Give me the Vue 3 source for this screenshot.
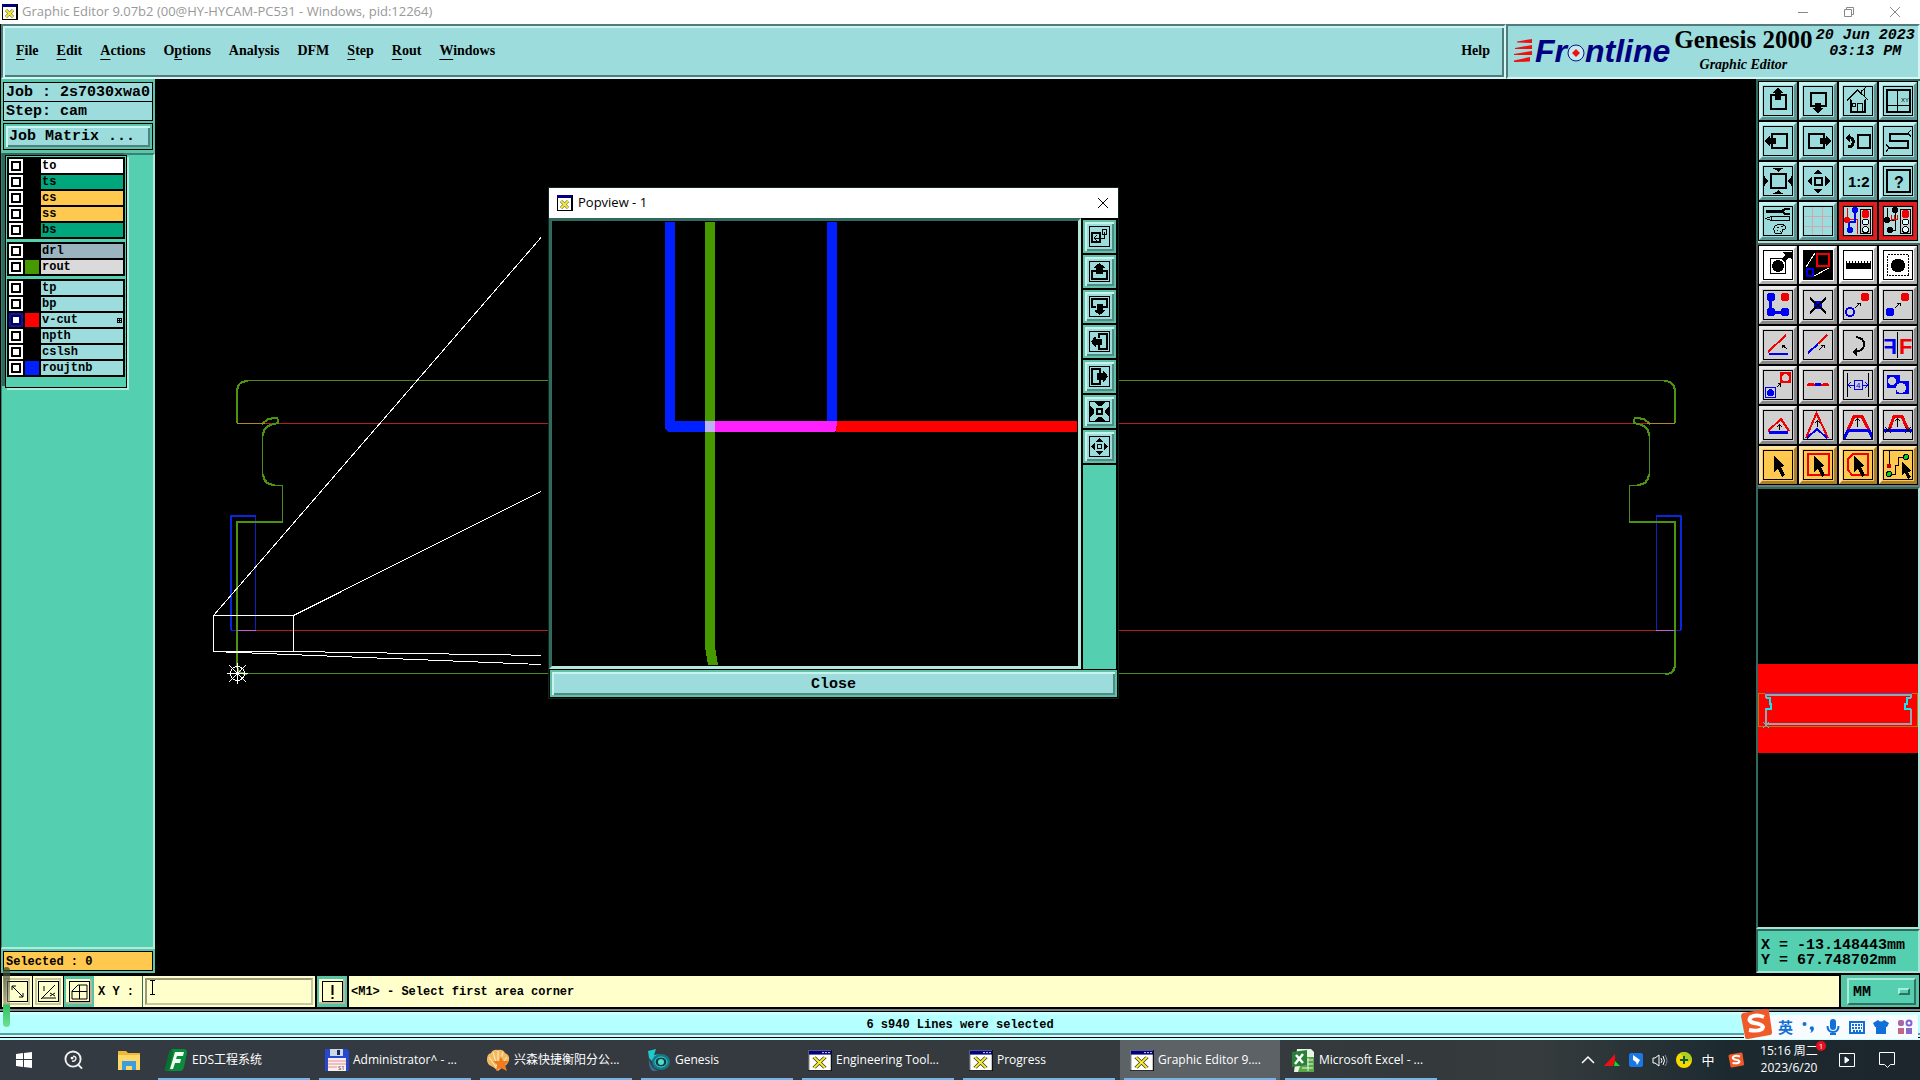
<script setup>
import { ref } from 'vue'

const menus = [
  { pre: '', key: 'F', post: 'ile' },
  { pre: '', key: 'E', post: 'dit' },
  { pre: '', key: 'A', post: 'ctions' },
  { pre: 'O', key: 'p', post: 'tions' },
  { pre: 'Analysis', key: '', post: '' },
  { pre: 'DFM', key: '', post: '' },
  { pre: '', key: 'S', post: 'tep' },
  { pre: '', key: 'R', post: 'out' },
  { pre: '', key: 'W', post: 'indows' },
]

const layerGroups = [
  [
    { name: 'to', bg: '#ffffff' },
    { name: 'ts', bg: '#00a67c' },
    { name: 'cs', bg: '#ffc84f' },
    { name: 'ss', bg: '#ffc84f' },
    { name: 'bs', bg: '#00a67c' },
  ],
  [
    { name: 'drl', bg: '#9bb5c0' },
    { name: 'rout', bg: '#dadada', color: '#469a00' },
  ],
  [
    { name: 'tp', bg: '#9cdcdc' },
    { name: 'bp', bg: '#9cdcdc' },
    { name: 'v-cut', bg: '#9cdcdc', color: '#ff0000', current: true },
    { name: 'npth', bg: '#9cdcdc' },
    { name: 'cslsh', bg: '#9cdcdc' },
    { name: 'roujtnb', bg: '#9cdcdc', color: '#0020ff' },
  ],
]

const line = (color, width) => `fill="none" stroke="${color}" stroke-width="${width}"`
const K = line('#000', 1)
const K2 = line('#000', 2)
const R = line('#f00000', 2)
const B = line('#0000f0', 2)
const arrowUp = '<path d="M15 2l6 5h-3v7h-6V7H9z"/>'
const cursor = '<path d="M11 6v16l4-3 4 8 3-2-4-8 4-1z"/>'
const lights = `<rect x="17.500" y="3.500" width="10" height="24" fill="#ccc" stroke="#000"/><circle cx="22.500" cy="8" r="4" fill="#f00000"/><circle cx="22.500" cy="16" r="3" fill="#dff" stroke="#000"/><circle cx="22.500" cy="23.500" r="3" fill="#dff" stroke="#000"/>`

const viewTools = [
  { name: 'Pan up', art: `<rect x="8" y="9" width="15" height="14" ${K2}/>${arrowUp}` },
  { name: 'Pan down', art: `<rect x="8" y="7" width="15" height="13" ${K2}/><path d="M15 27l-6-5h3v-5h6v5h3z"/>` },
  { name: 'Home', art: `<path ${K} d="M4 14.500L14.500 4l11 10.500M7.500 13v13.500h15V13M14.500 26V17.500h5V26M9.500 17.500h3v3h-3zM18.500 7V4.500l3-1V11M21 3l2-2M7 26.500h16"/><path ${K2} d="M7 26h16M8 14v12M22 14v12"/>` },
  { name: 'Coordinates', art: `<rect x="4" y="4" width="23" height="22" ${K2}/><path ${K} d="M14.500 3v23M3 19.500h24"/><text x="18" y="16" font-size="6" font-family="Liberation Sans">XY</text>` },
  { name: 'Pan left', art: `<rect x="9" y="8" width="15" height="14" ${K2}/><path d="M2 15l5-6v3h6v6H7v3z"/>` },
  { name: 'Pan right', art: `<rect x="6" y="8" width="15" height="14" ${K2}/><path d="M28 15l-5-6v3h-6v6h6v3z"/>` },
  { name: 'Previous view', art: `<rect x="15" y="9" width="12" height="13" ${K2}/><path ${line('#000', 3)} d="M5 11.500h2q4 1 3 6-1 4-5 3"/><path d="M2 12l5-5v9z"/>` },
  { name: 'Serpentine', art: `<path ${K2} d="M25 8H7v7h18v7H6"/><path ${K} d="M28 4l-3 3 3 4M3 18l3 4-3 4"/>` },
  { name: 'Zoom in', art: `<rect x="8" y="8" width="15" height="14" ${K2}/><path d="M9 2h12l-4 2-2 2-2-2zM9 28h12l-4-2-2-2-2 2zM1 9v12l2-4 3-2-3-2zM29 9v12l-2-4-3-2 3-2z"/>` },
  { name: 'Zoom out', art: `<rect x="12" y="12" width="7" height="7" ${K2}/><path d="M15 4l5 4H10zM15 27l5-4H10zM4 15l5-5v10zM27 15l-5-5v10z"/>` },
  { name: 'Scale', art: '<text x="5" y="21" font-size="15" font-weight="bold" font-family="Liberation Sans">1:2</text>' },
  { name: 'Help', art: `<rect x="4" y="4" width="23" height="22" ${K2}/><text x="11" y="22" font-size="16" font-weight="bold" font-family="Liberation Sans">?</text>` },
  { name: 'Settings', art: `<path ${line('#000', 3)} d="M3 5.500h16"/><path ${K2} d="M27 3h-5l-3 2 3 3h5"/><path ${K} d="M3 12.500l5-2h18v4H8zM8 10v4M12 27q-3-6 2-8 6-2 9 2 0 3-4 3 1 4-4 4z"/><path ${K} d="M14 21h2M18 20h2M14 24h1M17 25h1"/>` },
  { name: 'Grid', art: `<path ${line('#d0a8b0', 1)} d="M9.500 1v28M19.500 1v28M1 10.500h28M1 20.500h28"/>` },
  { name: 'Snap mode', kind: 'alert', art: `<path ${line('#f00000', 1)} d="M4.500 2v11h10v15"/><path ${B} d="M12 4v12H6v8"/><circle cx="4" cy="14" r="3" fill="#f00000"/><circle cx="12" cy="4" r="3" fill="#0000f0"/><circle cx="7" cy="24" r="3" fill="#0000f0"/>${lights}` },
  { name: 'Clearance mode', kind: 'alert', art: `<path ${K} d="M4.500 2v12h6M12.500 4v20H6"/><path ${line('#f00000', 1)} d="M8.500 9v6M11.500 9v6M8 13.500h7M14.500 9v5"/><circle cx="4" cy="14" r="3"/><circle cx="12" cy="4" r="3"/><circle cx="7" cy="24" r="3"/>${lights}` },
]

const smallArrow = (x, y) => `<path ${K} d="M${x} ${y}l5-5M${x + 2} ${y - 5}h3v3"/>`

const editTools = [
  { name: 'Feature move', kind: 'white', art: `<rect x="7.500" y="8.500" width="15" height="15" ${K}/><circle cx="15" cy="16" r="6"/><path d="M19 9l3-4-2-3h9v7l-3-1-5 4z"/>` },
  { name: 'Popview', kind: 'white', art: `<rect width="30" height="30"/><rect x="14" y="4" width="12" height="12" ${R}/><rect x="4" y="19" width="6" height="7" fill="#000" stroke="#0000f0" stroke-width="2"/><path ${line('#fff', 1)} d="M3 17L12 3M11 26l15-8"/>` },
  { name: 'Measure', kind: 'white', art: `<rect x="3" y="13" width="25" height="6"/><path ${K} d="M3.500 11v3M6.500 11v3M9.500 11v3M12.500 11v3M15.500 11v3M18.500 11v3M21.500 11v3M24.500 11v3M27.500 11v3"/>` },
  { name: 'Select feature', kind: 'white', art: `<rect x="4.500" y="4.500" width="21" height="21" ${K} stroke-dasharray="2 1"/><circle cx="15" cy="15.500" r="7"/>` },
  { name: 'Add', kind: 'gray', art: `<path ${line('#0000f0', 3)} d="M7.500 7v15H22"/><g fill="#0000f0"><circle cx="8" cy="7" r="4.500"/><circle cx="8" cy="22" r="4.500"/><circle cx="22" cy="22" r="4.500"/></g><circle cx="22" cy="7" r="4.500" fill="#f00000"/>` },
  { name: 'Delete', kind: 'gray', art: `<circle cx="15" cy="15" r="4.500" fill="#0000f0"/><path ${K2} d="M7 8l16 15M23 8L7 23"/>` },
  { name: 'Move', kind: 'gray', art: `<circle cx="7" cy="22" r="4" ${B}/><circle cx="22" cy="7" r="4.500" fill="#f00000"/>${smallArrow(12, 18)}` },
  { name: 'Copy', kind: 'gray', art: `<circle cx="7" cy="22" r="4.500" fill="#0000f0"/><circle cx="22" cy="7" r="4.500" fill="#f00000"/>${smallArrow(12, 18)}` },
  { name: 'Rotate', kind: 'gray', art: `<path ${R} d="M5 22L23 5"/><path ${B} d="M6 24h19"/><path ${K} d="M24 19l-5-4M19 18v-3h3"/>` },
  { name: 'Stretch line', kind: 'gray', art: `<path ${R} d="M15 14l9-9"/><path ${B} d="M5 23l10-9"/>${smallArrow(16, 20)}` },
  { name: 'Undo', kind: 'gray', art: `<path ${K2} d="M13 7q8 1 8 7 0 7-9 8"/><path d="M9 22l5-4v8z"/>` },
  { name: 'Mirror', kind: 'gray', art: `<path ${K} d="M14.500 2v26"/><text x="16" y="24" font-size="22" font-weight="bold" fill="#f00000" font-family="Liberation Sans">F</text><text transform="scale(-1 1)" x="-14" y="24" font-size="22" font-weight="bold" fill="#0000f0" font-family="Liberation Sans">F</text>` },
  { name: 'Change symbol', kind: 'gray', art: `<rect x="2.500" y="17.500" width="10" height="10" ${line('#0000f0', 1)}/><circle cx="7.500" cy="22.500" r="3.500" fill="#0000f0"/><rect x="17" y="2" width="11" height="11" fill="#f00000"/><circle cx="22.500" cy="7.500" r="3.500" fill="#d0d0d0"/><path ${K} d="M14 17l3-3M15 13.500h2v3"/>` },
  { name: 'Break line', kind: 'gray', art: `<path ${R} d="M4 15h22"/><path ${line('#f00000', 3)} d="M5 14.500h6M20 14.500h5"/><path ${line('#0000f0', 3)} d="M12 14.500h6"/>` },
  { name: 'Resize distance', kind: 'gray', art: `<path ${K} d="M4.500 3v24M25.500 3v24"/><path ${line('#0000f0', 1)} d="M5 15.500h6M19 15.500h6M8 12l-3 3 3 3M22 12l3 3-3 3M11.500 10.500h8v9h-8z"/><text x="13" y="18" font-size="8" fill="#0000f0" font-family="Liberation Sans">4</text>` },
  { name: 'Surface', kind: 'gray', art: '<path fill="#0000f0" d="M4 5h13v6h9v13H13v-6H4z"/><circle cx="9" cy="11" r="4" fill="#d0d0d0"/><circle cx="18" cy="18" r="5" fill="#d0d0d0"/>' },
  { name: 'Move corner', kind: 'gray', art: `<path ${R} d="M5 21L18 9l8 12"/><path ${line('#0000f0', 3)} d="M6 22.500h19"/><path ${K} d="M16.500 20v-5M14 17l2.500-2 2.500 2"/>` },
  { name: 'Move apex', kind: 'gray', art: `<path ${R} d="M3 28L13.500 3 25 28"/><path ${B} d="M4 28l10-9 10 9"/><path ${K} d="M14.500 17v-6M12 13l2.500-2 2.500 2"/>` },
  { name: 'Move segment', kind: 'gray', art: `<path ${line('#f00000', 3)} d="M5 20L11 6.500h8L26 20"/><path ${line('#0000f0', 3)} d="M1 29l4-8.500h21l4 8.500"/><path ${K} d="M14.500 17v-8M12 11l2.500-2 2.500 2"/>` },
  { name: 'Move free segment', kind: 'gray', art: `<path ${line('#f00000', 3)} d="M6 20L11 6.500h8L25 20"/><path ${line('#0000f0', 3)} d="M1 20.500h28"/><path ${K} d="M14.500 17v-8M12 11l2.500-2 2.500 2M2 17l6 6M8 17l-6 6M22 17l6 6M28 17l-6 6"/>` },
  { name: 'Select', kind: 'orange', art: cursor },
  { name: 'Select in rectangle', kind: 'orange', art: `<rect x="5" y="4" width="21" height="21" ${R}/>${cursor}` },
  { name: 'Select in polygon', kind: 'orange', art: `<path ${R} d="M10 4h15v21H9l-4-5V9z"/>${cursor}` },
  { name: 'Select net', kind: 'orange', art: `<path ${K} d="M6.500 1v15M6 24h6v-9h3V7h8"/><circle cx="6" cy="16" r="2.500" fill="#c00000"/><circle cx="6" cy="24" r="2.500" fill="#00d020" stroke="#000"/><circle cx="23" cy="7" r="2.500" fill="#00d020" stroke="#000"/><path d="M19 12v13l3-2 3 6 3-2-3-5 3-1z"/>` },
]

const popArrow = (deg) =>
  `<g transform="rotate(${deg} 10.500 10.500)"><path ${K2} d="M7 10H3v8h15v-8h-4"/><path d="M10.500 2l5 4v1h-2v6H7V7H5V6z"/></g>`

const popTools = [
  { name: 'Fit to source', art: `<rect x="3" y="7" width="8" height="9" ${K2}/><path ${K} d="M13.500 3.500h4v5h-4zM15.500 6v6H5M8 9l-3 3 3 3"/>` },
  { name: 'Up', art: popArrow(0) },
  { name: 'Down', art: popArrow(180) },
  { name: 'Left', art: popArrow(270) },
  { name: 'Right', art: popArrow(90) },
  { name: 'In', art: `<rect x="8" y="8" width="5" height="5" ${K2}/><path d="M5 1h11l-4 4h-3zM5 20h11l-4-4h-3zM1 5v11l4-4v-3zM20 5v11l-4-4v-3z"/>` },
  { name: 'Out', art: `<rect x="8.500" y="8.500" width="4" height="4" ${K}/><path d="M10.500 2l4 4h-8zM10.500 19l4-4h-8zM2 10.500l4-4v8zM19 10.500l-4-4v8z"/>` },
]

const X_ICON = '<rect x="1" y="1" width="22" height="30" fill="#fff" stroke="#888"/><path d="M0 31.500h24M23.500 0v32" stroke="#000"/><rect x="1" y="1" width="22" height="6" fill="#000080"/><path d="M14 4h2M17 4h2M20 4h2" stroke="#fff"/><path d="M6 11l11 16M17 11L6 27" stroke="#222" stroke-width="4"/><path d="M6 11l11 16M17 11L6 27" stroke="#f4ea30" stroke-width="2.500"/>'

const tasks = [
  { label: 'EDS工程系统', box: '0 0 24 24', art: '<path d="M8 1h12q3 0 3 4l-3 14q-1 4-4 4H1l5-18z" fill="#0b8b3c"/><path d="M8 1l-3 3-4 16v3l4-1L9 4z" fill="#0a6e30"/><path d="M11 4h9l-1 4h-6l-1 3h5l-1 4h-5l-2 6H6z" fill="#f0fff0"/>' },
  { label: 'Administrator^ - ...', box: '0 0 24 24', art: '<path d="M0 1h22l2 2v20H0z" fill="#2448d0"/><rect x="5" y="1" width="13" height="7" fill="#cdd8e8"/><rect x="12" y="2" width="3" height="5" fill="#1a2a60"/><rect x="3" y="10" width="18" height="13" fill="#fdeeee"/><path d="M3 13h18M3 16h18M3 19h9" stroke="#e09090"/><text x="13" y="22" font-size="6" fill="#333">S1</text>' },
  { label: '兴森快捷衡阳分公...', box: '0 0 24 24', art: '<path d="M12 2q5-1 7 3 5 2 4 7-1 5-6 7l-5 4-5-4Q0 16 1 11q0-5 4-6 2-4 7-3z" fill="#f3b960"/><path d="M12 22L3 9M12 22L7 4M12 22V3M12 22l5-18M12 22l9-13" stroke="#fff0c8" fill="none"/><path d="M15 8l2 5 6 0-4 4 2 6-6-3-5 3 1-6-4-4h6z" fill="#f07c20"/>' },
  { label: 'Genesis', box: '0 0 24 24', art: '<path d="M1 3l8-2-2 6 6-1-8 7-3-3z" fill="#20c8d0"/><path d="M2 11q2 9 9 12H5Q1 18 2 11z" fill="#3a6a90"/><ellipse cx="14" cy="14" rx="9" ry="8" fill="#127a86"/><ellipse cx="14" cy="14" rx="6" ry="5" fill="#0c3a50" stroke="#40d8d0"/><circle cx="14" cy="14" r="3" fill="#50e0c0"/>' },
  { label: 'Engineering Tool...', box: '0 0 24 32', art: X_ICON, win: true },
  { label: 'Progress', box: '0 0 24 32', art: X_ICON, win: true },
  { label: 'Graphic Editor 9....', box: '0 0 24 32', art: X_ICON, win: true, active: true },
  { label: 'Microsoft Excel - ...', box: '0 0 24 24', art: '<path d="M6 1h14l3 3v20H3z" fill="#e8f4e4"/><path d="M12 9h11v15H7z" fill="#58a848"/><path d="M13 12h9M13 16h9M11 20h11M17 10v13" stroke="#e8f4e4"/><path d="M1 4l15-2v15L1 19z" fill="#2a8038"/><path d="M5 7l7 8M12 6l-8 10" stroke="#fff" stroke-width="2.500"/>' },
]

const layersOn = ref({})
const xy = ref('')
const unit = ref('MM')
</script>

<template>
  <div class="screen">
    <header class="titlebar">
      <svg class="appicon" viewBox="0 0 16 16"><rect x="0" y="0" width="16" height="16" fill="#000" /><rect x="1" y="3" width="13" height="12" fill="#fff" /><rect width="15" height="3" fill="#000080" /><path d="M4 6l7 7M11 6l-7 7" stroke="#555" stroke-width="3" /><path d="M4 6l7 7M11 6l-7 7" stroke="#f4ea30" stroke-width="2" /></svg>
      <h1>Graphic Editor 9.07b2 (00@HY-HYCAM-PC531 - Windows, pid:12264)</h1>
      <div class="caption">
        <button aria-label="Minimize"><svg viewBox="0 0 12 12"><path d="M1 6.500h10" /></svg></button>
        <button aria-label="Restore"><svg viewBox="0 0 12 12"><path d="M1.500 3.500h7v7h-7zM3.500 3V1.500h7v7H9" /></svg></button>
        <button aria-label="Close window"><svg viewBox="0 0 12 12"><path d="M1 1l10 10M11 1L1 11" /></svg></button>
      </div>
    </header>

    <div class="topbar">
      <nav class="menubar">
        <button v-for="(m, i) in menus" :key="i">{{ m.pre }}<u v-if="m.key">{{ m.key }}</u>{{ m.post }}</button>
        <button class="help">Help</button>
      </nav>
      <section class="brand">
        <div class="frontline">
          <svg class="streaks" viewBox="0 0 21 24"><path fill="#f01010" d="M3 2.500L18 0v4L3 3.500zM1 9L18 6v4L1 10zM0 15L18 12v4L0 16zM0 21.500L16 18v4.500L0 23z" /></svg>
          <span class="word">Fr</span>
          <svg class="target" viewBox="0 0 18 22"><circle cx="9" cy="12" r="8" fill="#c4ecf0" stroke="#101090" stroke-width="1" /><path d="M9 8l4 4-4 4-4-4z" fill="#f01010" /></svg>
          <span class="word">ntline</span>
        </div>
        <div class="product">
          <strong>Genesis 2000</strong>
          <em>Graphic Editor</em>
        </div>
        <div class="stamp">20 Jun 2023<br />03:13 PM</div>
      </section>
    </div>

    <main class="work">
      <aside class="left">
        <div class="jobinfo">
          <div class="field">Job : 2s7030xwa0</div>
          <div class="field">Step: cam</div>
        </div>
        <div class="matrix"><button>Job Matrix ...</button></div>
        <div class="layerpane">
          <div class="layerlist">
            <div v-for="(g, gi) in layerGroups" :key="gi" class="group">
              <label v-for="l in g" :key="l.name" class="layer">
                <input v-model="layersOn[l.name]" type="checkbox" :class="{ current: l.current }" />
                <i :style="{ background: l.color || '#000' }"></i>
                <span :style="{ background: l.bg }">{{ l.name }}<svg v-if="l.current" viewBox="0 0 5 5" shape-rendering="crispEdges"><path d="M0 0h5v5H0z" /><path fill="#9cdcdc" d="M1 1h1v1H1zM3 1h1v1H3zM1 3h1v1H1zM3 3h1v1H3z" /></svg></span>
              </label>
            </div>
          </div>
        </div>
        <div class="selected"><div>Selected : 0</div></div>
      </aside>

      <section class="canvas">
        <svg viewBox="155 79 1601 896" fill="none">
          <defs>
            <g id="board-end" shape-rendering="crispEdges">
              <path stroke="#1020c8" stroke-width="1" d="M255.500 516v114M231 630.500h6" />
              <path stroke="#0828e0" stroke-width="2" d="M256 516h-25v114" />
              <path stroke="#4c8c20" stroke-width="1" d="M956 380.500H248M956 673.500H247M262.500 436v38M273 485.500h9.500V522" />
              <path stroke="#4c9410" stroke-width="2" d="M248 381q-11 0-11 11v31M262 424l6-5 7-1h2l1 2v3l-4 1q-11 2-11 12M263 474q1 11 12 11M283 522h-46v142q0 10 10 10" />
              <path stroke="#b08828" d="M237 423.500h28" />
              <path stroke="#c060d0" d="M237 630.500h19" />
            </g>
          </defs>
          <path stroke="#b02020" d="M265 423.500h1383M255 630.500h1401" shape-rendering="crispEdges" />
          <use href="#board-end" />
          <use href="#board-end" transform="translate(1912 0) scale(-1 1)" />
          <g stroke="#fff" shape-rendering="crispEdges">
            <path d="M213.500 615.500h80v36h-80zM213.500 615.500L541 237.500M293.500 615.500L541 491.500M213.500 651.500L541 664.500M293.500 651.500L541 655.500" />
            <path d="M227 673.500h21M237.500 663v21M229 665l17 17M246 665l-17 17" />
            <circle cx="237.500" cy="673.500" r="7" />
          </g>
        </svg>
      </section>

      <aside class="right">
        <div class="tools">
          <button v-for="t in viewTools" :key="t.name" :aria-label="t.name" :class="t.kind">
            <svg viewBox="1 1 28 28" shape-rendering="crispEdges"><g v-html="t.art"></g></svg>
          </button>
        </div>
        <div class="tools edit">
          <button v-for="t in editTools" :key="t.name" :aria-label="t.name" :class="t.kind">
            <svg viewBox="1 1 28 28" shape-rendering="crispEdges"><g v-html="t.art"></g></svg>
          </button>
        </div>
        <div class="overview">
          <svg viewBox="0 0 160 89" shape-rendering="crispEdges" fill="none">
            <rect width="160" height="89" fill="#ff0000" />
            <rect x="0.500" y="29.500" width="159" height="33" stroke="#b87810" />
            <path stroke="#90a8b0" stroke-width="2" d="M8 34v-3h145v3M8 44v16h145V45" />
            <path stroke="#6040a0" d="M7 29.500h147" />
            <path stroke="#10e8f0" stroke-width="2" d="M8 34h4v6h1v5H8M153 34h-4v6h-2v5h6" />
            <path stroke="#50c8d0" d="M5 58l6 6M11 58l-6 6" />
          </svg>
        </div>
        <div class="coords">X = -13.148443mm<br />Y = 67.748702mm</div>
      </aside>

      <section class="popview" role="dialog" aria-label="Popview - 1">
        <header>
          <svg class="appicon" viewBox="0 0 16 16"><rect width="16" height="16" fill="#000" /><rect x="1" y="3" width="13" height="12" fill="#fff" /><rect width="15" height="3" fill="#000080" /><path d="M4 6l7 7M11 6l-7 7" stroke="#555" stroke-width="3" /><path d="M4 6l7 7M11 6l-7 7" stroke="#f4ea30" stroke-width="2" /></svg>
          <h2>Popview - 1</h2>
          <button aria-label="Close popview"><svg viewBox="0 0 12 12"><path d="M1 1l10 10M11 1L1 11" /></svg></button>
        </header>
        <div class="popbody">
          <div class="popcanvas">
            <svg viewBox="552 221 526 445" shape-rendering="crispEdges">
              <path fill="#0020ff" d="M665 222h10v199h30v11h-37l-3-4zM827 222h10v199h-10z" />
              <path fill="#469a00" d="M705 222h10v199h-10zM705 432h10v215l3 18h-10l-3-18z" />
              <path fill="#ff20ff" d="M715 421h122v8l-2 3H715z" />
              <path fill="#c0b0f8" d="M705 421h10v11h-10z" />
              <path fill="#ff0000" d="M837 421h240v11H836z" />
            </svg>
          </div>
          <div class="poptools">
            <button v-for="t in popTools" :key="t.name" :aria-label="t.name">
              <svg viewBox="1 1 19 19" shape-rendering="crispEdges"><g v-html="t.art"></g></svg>
            </button>
            <div class="rest"></div>
          </div>
        </div>
        <div class="popclose"><button>Close</button></div>
      </section>
    </main>

    <section class="prompt">
      <button class="flat" aria-label="Snap"><svg viewBox="1 1 19 19"><path d="M5 5l11 11M5 9V5h4M12 16h4v-4" /></svg></button>
      <button class="flat" aria-label="Angle"><svg viewBox="1 1 19 19"><path d="M3 18L17 4M6 5v5M4 17h14M12 12l5 3M17 12l-5 3" /></svg></button>
      <div class="cell"><button aria-label="Grid snap"><svg viewBox="1 1 19 19"><path d="M3 10l6-6h9v14H3zM10.500 4v14M3 10.500h15" /></svg></button></div>
      <label for="xy">X Y :</label>
      <div class="entry">
        <input id="xy" v-model="xy" type="text" />
        <svg class="ibeam" viewBox="0 0 7 15"><path d="M1 .5h5M3.500 .5v14M1 14.500h5" /></svg>
      </div>
      <div class="cell"><button aria-label="Apply"><svg viewBox="1 1 19 19"><path stroke-width="2" d="M10.500 4v10M10.500 16v2" /></svg></button></div>
      <p>&lt;M1&gt; - Select first area corner</p>
      <div class="unit">
        <select v-model="unit" aria-label="Units"><option>MM</option><option>INCH</option></select>
        <i></i>
      </div>
      <span class="meter"></span>
    </section>

    <section class="status">
      <p>6 s940 Lines were selected</p>
      <div class="ime">
        <svg class="sogou" viewBox="0 0 32 30"><path d="M3 4l23-4q2 0 3 2l3 21q0 3-2 3L8 30q-3 0-3-2L1 7q0-2 2-3z" fill="#f05a28" /><path d="M24 8q-8-3-13 0-4 4 3 6 8 1 9 4-1 5-14 3" fill="none" stroke="#fff" stroke-width="4" /></svg>
        <span>英</span>
        <svg viewBox="0 0 16 16"><circle cx="3.500" cy="5" r="2" fill="#1070d8" /><path d="M9 8q3-2 4 1 0 4-4 5 2-2 1-3-2-1-1-3z" fill="#1070d8" /></svg>
        <svg viewBox="0 0 16 16"><rect x="5" y="0" width="6" height="11" rx="3" fill="#1070d8" /><path d="M2.500 7q0 6 5.500 6t5.500-6M5 15h6" fill="none" stroke="#1070d8" stroke-width="2" /></svg>
        <svg viewBox="0 0 16 16"><rect x="1" y="3" width="14" height="11" fill="none" stroke="#1070d8" stroke-width="2" /><path d="M3 6h10M3 9h10M4 12h8" stroke="#1070d8" stroke-width="2" stroke-dasharray="2 1" /></svg>
        <svg viewBox="0 0 16 16"><path d="M5 1q3 3 6 0l5 3-2 4h-1v7H3V8H2L0 4z" fill="#1070d8" /></svg>
        <svg viewBox="0 0 16 16"><g fill="none" stroke-width="2"><rect x="2" y="2" width="4" height="4" rx="1" stroke="#a868a8" fill="#a868a8" /><circle cx="12" cy="4" r="2.500" stroke="#8060d8" /><rect x="2" y="10" width="4" height="4" stroke="#c06888" fill="#c06888" /><rect x="10" y="10" width="4" height="4" stroke="#8868c8" fill="#8868c8" /></g></svg>
      </div>
    </section>

    <footer class="taskbar">
      <button class="start" aria-label="Start"><svg viewBox="0 0 16 16"><path fill="#fff" d="M0 2l7-1v6H0zM8 1l8-1v7H8zM0 8h7v7l-7-1zM8 8h8v8l-8-1z" /></svg></button>
      <button class="search" aria-label="Search"><svg viewBox="0 0 20 20" fill="none" stroke="#f0f0f0"><circle cx="9.500" cy="9" r="8" stroke-width="2" /><path d="M9.500 6q3.500 0 3 3-1 3-4 2" stroke-width="1.500" /><circle cx="8.500" cy="8" r="1.500" fill="#fff" stroke="none" /><path d="M15 15l4 4" stroke-width="2" /></svg></button>
      <button class="files" aria-label="File Explorer"><svg viewBox="0 0 22 20"><path d="M0 1h8l2 2h12v17H0z" fill="#f0b838" /><path d="M0 5h22v15H0z" fill="#ffd968" /><path d="M4 20v-9h14v9h-4v-4H8v4z" fill="#3c9ce0" /></svg></button>
      <nav class="tasks">
        <button v-for="t in tasks" :key="t.label" :class="{ active: t.active }">
          <svg :viewBox="t.box" :class="{ win: t.win }" preserveAspectRatio="none"><g v-html="t.art"></g></svg>
          <span>{{ t.label }}</span>
        </button>
      </nav>
      <div class="tray">
        <svg viewBox="0 0 16 16" fill="none" stroke="#fff"><path d="M2 11l6-6 6 6" stroke-width="1.500" /></svg>
        <svg viewBox="0 0 16 16"><path d="M11 2v7l-2 5H0z" fill="#f01010" /><path d="M11 9l5 5h-6z" fill="#10d830" /></svg>
        <svg viewBox="0 0 16 16"><rect x="1" y="1" width="14" height="14" rx="2" fill="#1878e8" /><path d="M5 3l7 5-3 5-1-3-3-2z" fill="#fff" /></svg>
        <svg viewBox="0 0 16 16" fill="none" stroke="#fff"><path d="M1 6h2l4-3v11l-4-3H1zM9 6q2 3 0 5M11 4q3 5 0 9" /><path d="M13 3q4 6 0 11" stroke="#889" /></svg>
        <svg viewBox="0 0 16 16"><circle cx="8" cy="8" r="8" fill="#f8d800" /><path d="M4 1q10-3 12 7l-4 2z" fill="#a8d020" /><path d="M8 4v8M4 8h8" stroke="#105830" stroke-width="2" /></svg>
        <span>中</span>
        <svg class="s2" viewBox="0 0 32 30"><path d="M3 4l23-4q2 0 3 2l3 21q0 3-2 3L8 30q-3 0-3-2L1 7q0-2 2-3z" fill="#f05a28" /><path d="M24 8q-8-3-13 0-4 4 3 6 8 1 9 4-1 5-14 3" fill="none" stroke="#fff" stroke-width="4" /></svg>
      </div>
      <div class="clock">15:16 周二<br />2023/6/20<b>1</b></div>
      <svg class="note" viewBox="0 0 18 18" fill="none" stroke="#fff"><path d="M1.500 2.500h15v13h-15z" /><path d="M7 6v6l4-3z" fill="#fff" /></svg>
      <svg class="note last" viewBox="0 0 18 18" fill="none" stroke="#fff"><path d="M1.500 1.500h15v12h-4l-3 3-3-3h-5z" /></svg>
    </footer>
  </div>
</template>

<style>
body {
  margin: 0;
  background: #000;
}
</style>

<style scoped>
* {
  box-sizing: border-box;
}
.screen {
  display: flex;
  flex-direction: column;
  min-height: 100vh;
  overflow: hidden;
  background: #000;
  color: #000;
  font-family: "Liberation Mono", monospace;
}
button {
  margin: 0;
  padding: 0;
  border: 0;
  background: none;
  color: inherit;
  font: inherit;
}
svg {
  display: block;
  flex: none;
}
p,
h1,
h2 {
  margin: 0;
}

.titlebar {
  display: flex;
  align-items: center;
  height: 24px;
  padding-left: 2px;
  background: #fff;
}
.appicon {
  width: 16px;
  height: 16px;
}
.titlebar h1 {
  flex: 1;
  padding: 0 0 2px 4px;
  color: #999;
  font: 13px/22px "Open Sans", "Noto Sans", sans-serif;
}
.caption {
  display: flex;
  padding-right: 2px;
}
.caption button {
  display: flex;
  justify-content: center;
  width: 46px;
}
.caption svg {
  width: 12px;
  height: 12px;
  fill: none;
  stroke: #888;
}

.topbar {
  display: flex;
  height: 55px;
}
.menubar {
  display: flex;
  flex: 1;
  align-items: center;
  gap: 18px;
  margin-left: 1px;
  padding: 2px 14px 0 13px;
  background: #9cdcdc;
  border: 2px solid #507c7c;
  border-right-color: #d4f6f4;
  border-bottom-color: #d4f6f4;
  box-shadow: inset 2px 2px #ccf4f4, inset -2px -2px #507c7c;
  font: bold 14px/18px "Liberation Serif", serif;
}
.menubar button {
  padding-bottom: 4px;
}
.menubar u {
  text-underline-offset: 4px;
}
.menubar .help {
  margin-left: auto;
}
.brand {
  display: flex;
  width: 414px;
  padding: 0 0 0 6px;
  background: #9cdcdc;
  border: 2px solid #507c7c;
  border-right-color: #d4f6f4;
  border-bottom-color: #d4f6f4;
}
.frontline {
  display: flex;
  flex: none;
  align-items: flex-start;
  padding-top: 7px;
  color: #000080;
  font: italic bold 32px/36px "Liberation Sans", sans-serif;
}
.streaks {
  width: 21px;
  height: 24px;
  margin-top: 6px;
}
.target {
  width: 18px;
  height: 22px;
  margin-top: 8px;
}
.product {
  display: flex;
  flex: none;
  flex-direction: column;
  align-items: center;
  width: 142px;
  padding-left: 4px;
  font-family: "Liberation Serif", serif;
  white-space: nowrap;
}
.product strong {
  font-size: 25px;
  line-height: 28px;
}
.product em {
  font-size: 14px;
  font-weight: bold;
  line-height: 22px;
}
.stamp {
  flex: 1;
  padding-top: 2px;
  font: italic bold 15px/16px "Liberation Mono", monospace;
  text-align: center;
  white-space: nowrap;
}

.work {
  position: relative;
  display: flex;
  flex: 1;
}
.left {
  display: flex;
  flex-direction: column;
  width: 154px;
  margin-left: 1px;
  margin-bottom: 2px;
  background: #54d0b0;
}
.jobinfo,
.matrix,
.selected {
  background: #5cc4a8;
}
.jobinfo {
  padding: 3px 2px 2px;
}
.field {
  height: 20px;
  padding-left: 2px;
  background: #9cdcdc;
  border: 1px solid #000;
  font-size: 15px;
  line-height: 20px;
  white-space: nowrap;
}
.field + .field {
  margin-top: -1px;
}
.field,
.matrix button,
.popclose button {
  font-weight: bold;
}
.matrix {
  padding: 0 2px 3px;
}
.matrix button {
  display: block;
  width: 100%;
  height: 27px;
  padding-left: 5px;
  background: #9cdcdc;
  border: 1px solid #000;
  box-shadow: inset 0 0 0 2px #5cc4a8, inset 4px 4px #ccf4f4, inset -4px -4px #4f8282;
  font-size: 15px;
  text-align: left;
}
.layerpane {
  flex: 1;
  padding: 0 0 0 3px;
  border-top: 2px solid #3a8070;
  border-left: 1px solid #3a8070;
  border-right: 2px solid #b0ecdc;
  border-bottom: 2px solid #b0ecdc;
}
.layerlist {
  display: flex;
  flex-direction: column;
  gap: 3px;
  width: 122px;
  height: 233px;
  padding: 1px;
  border: 1px solid #000;
  box-shadow: 2px 2px #b0ecdc, -3px -2px #2f6a5c;
}
.group {
  display: flex;
  flex-direction: column;
  gap: 2px;
  padding: 2px;
  background: #000;
}
.group:last-child {
  margin-bottom: auto;
}
.layer {
  display: flex;
  gap: 2px;
  height: 14px;
}
.layer input {
  appearance: none;
  width: 14px;
  height: 14px;
  margin: 0;
  background: #fff;
  border: 2px solid #fff;
  box-shadow: inset 0 0 0 2px #000;
}
.layer input.current {
  border-color: #1010a0;
  box-shadow: inset 0 0 0 2px #000060;
}
.layer i {
  width: 14px;
}
.layer span {
  display: flex;
  flex: 1;
  align-items: center;
  justify-content: space-between;
  padding: 0 1px;
  font: bold 12px/14px "Liberation Mono", monospace;
}
.layer svg {
  width: 5px;
  height: 5px;
}
.selected {
  padding: 2px;
}
.selected div {
  height: 20px;
  padding-left: 2px;
  background: #ffc84f;
  border: 1px solid #000;
  font: bold 12px/20px "Liberation Mono", monospace;
}

.canvas {
  flex: 1;
  min-width: 0;
}
.canvas svg {
  width: 100%;
}

.right {
  display: flex;
  flex-direction: column;
  width: 164px;
  margin-bottom: 2px;
}
.tools {
  display: grid;
  grid-template-columns: repeat(4, 38px);
  gap: 2px;
  padding: 3px;
  background: #000;
  box-shadow: inset 2px 2px #2f6a5c, inset -2px -2px #a8e4d8;
}
.tools.edit {
  box-shadow: inset 2px 2px #505a58, inset -2px -2px #707c7a;
}
.tools button {
  height: 38px;
  padding: 1px;
  background: #9cdcdc;
  border: 3px solid #c8f2f0;
  border-right-color: #5c9494;
  border-bottom-color: #5c9494;
}
.tools svg {
  width: 30px;
  height: 30px;
  border: 1px solid #000;
}
.tools .alert {
  border-color: #e02020;
  background: #c81818;
}
.tools .alert svg {
  background: #b4dcdc;
}
.tools .white {
  background: #fff;
  border-color: #fff #b0b0b0 #b0b0b0 #fff;
}
.tools .gray {
  background: #d0d0d0;
  border-color: #ececec #888 #888 #ececec;
}
.tools .orange {
  background: #ffc84f;
  border-color: #ffe4a8 #a88030 #a88030 #ffe4a8;
}
.overview {
  display: flex;
  flex: 1;
  align-items: center;
  border: 2px solid #2f6a5c;
  border-right-color: #a8e4d8;
  border-bottom-color: #a8e4d8;
}
.overview svg {
  width: 100%;
}
.coords {
  height: 44px;
  padding: 7px 0 0 3px;
  background: #54d0b0;
  border: 2px solid #2f6a5c;
  border-right-color: #a8e4d8;
  border-bottom-color: #a8e4d8;
  font: bold 15px/15px "Liberation Mono", monospace;
  white-space: nowrap;
}

.popview {
  position: absolute;
  left: 549px;
  top: 109px;
  width: 569px;
  background: #000;
  outline: 1px solid #102420;
}
.popview header {
  display: flex;
  align-items: center;
  height: 30px;
  padding: 0 9px 0 8px;
  background: #fff;
}
.popview h2 {
  flex: 1;
  padding: 0 0 2px 5px;
  font: 13px/28px "Open Sans", "Noto Sans", sans-serif;
}
.popview header svg:not(.appicon) {
  width: 12px;
  height: 12px;
  stroke: #000;
}
.popbody {
  display: flex;
  gap: 2px;
}
.popcanvas {
  flex: 1;
  border: 3px solid #2f6a5c;
  border-right-color: #b4e8dc;
  border-bottom-color: #b4e8dc;
}
.popcanvas svg {
  width: 100%;
}
.poptools {
  display: flex;
  flex-direction: column;
  gap: 2px;
  width: 35px;
  padding: 2px 2px 0 0;
}
.poptools button {
  height: 33px;
  padding: 2px;
  background: #9cdcdc;
  border: 2px solid #60c0a8;
  box-shadow: inset 2px 2px #c4f4ec, inset -2px -2px #4f8c84;
}
.poptools svg {
  width: 21px;
  height: 21px;
  margin: auto;
  border: 1px solid #000;
}
.poptools .rest {
  flex: 1;
  background: #54d0b0;
}
.popclose {
  padding: 1px;
}
.popclose button {
  display: block;
  width: 100%;
  height: 27px;
  padding-top: 2px;
  background: #9cdcdc;
  border: 2px solid #60c0a8;
  box-shadow: inset 2px 2px #c8f4f0, inset -2px -2px #4f8c84;
  font-size: 15px;
}

.prompt {
  position: relative;
  display: flex;
  height: 33px;
  padding: 1px 0 1px 2px;
  background: #000;
}
.prompt svg {
  width: 21px;
  height: 21px;
  margin: auto;
  fill: none;
  stroke: #000;
}
.prompt button svg {
  border: 1px solid #000;
}
.prompt .flat {
  width: 30px;
  margin-right: 1px;
  background: #ffffcc;
  box-shadow: inset 0 0 0 2px #ffffcc, inset 0 0 0 4px #c8c8a0;
}
.cell {
  width: 30px;
  padding: 3px 2px;
  background: #54c4a4;
}
.cell button {
  display: flex;
  width: 26px;
  height: 25px;
  background: #ffffcc;
  box-shadow: inset -2px -2px #b8b898;
}
.prompt label {
  width: 49px;
  padding-left: 4px;
  background: #ffffcc;
  border-right: 1px solid #2f6a5c;
  font: bold 12px/33px "Liberation Mono", monospace;
}
.entry {
  position: relative;
  width: 172px;
  margin-right: 2px;
  padding: 2px;
  background: #ffffcc;
}
.entry input {
  display: block;
  width: 100%;
  height: 27px;
  padding: 0 6px;
  background: #ffffcc;
  border: 2px solid #98987c;
  border-right-color: #c8c8a0;
  border-bottom-color: #c8c8a0;
  outline: 0;
  font: bold 12px "Liberation Mono", monospace;
}
.prompt .ibeam {
  position: absolute;
  left: 6px;
  top: 4px;
  width: 7px;
  height: 15px;
}
.prompt p {
  flex: 1;
  margin-left: 2px;
  padding-left: 2px;
  background: #ffffcc;
  font: bold 12px/33px "Liberation Mono", monospace;
}
.unit {
  position: relative;
  width: 78px;
  margin: -1px 1px 0 2px;
  padding: 3px 3px 3px 6px;
  background: #54c4a4;
}
.unit select {
  appearance: none;
  width: 100%;
  height: 27px;
  padding: 2px 4px 0;
  background: #54d0b0;
  border: 2px solid #a8ecdc;
  border-right-color: #2f7060;
  border-bottom-color: #2f7060;
  border-radius: 0;
  font: bold 15px "Liberation Mono", monospace;
}
.unit i {
  position: absolute;
  right: 9px;
  top: 13px;
  width: 12px;
  height: 7px;
  background: #54d0b0;
  border: 2px solid #a8ecdc;
  border-right-color: #2f7060;
  border-bottom-color: #2f7060;
  pointer-events: none;
}
.meter {
  position: absolute;
  left: 3px;
  top: -8px;
  z-index: 2;
  width: 7px;
  height: 60px;
  border-radius: 4px;
  background: linear-gradient(rgb(60 70 50 / 75%) 0, rgb(150 150 120 / 55%) 62%, #30c060 63%, #70e090);
}

.status {
  position: relative;
  height: 32px;
  border-top: 1px solid #000;
  background: #c8ffff;
}
.status p {
  height: 29px;
  background: #b4ffff;
  border-bottom: 1px solid #000;
  box-shadow: inset 0 2px #788888, inset 0 3px #000, inset 0 6px #ccffff, inset 0 -2px #ccffff, inset 0 -4px #5c9c9c;
  font: bold 12px/32px "Liberation Mono", monospace;
  text-align: center;
}
.ime {
  position: absolute;
  right: 2px;
  bottom: 1px;
  display: flex;
  align-items: center;
  justify-content: flex-end;
  gap: 8px;
  width: 174px;
  height: 24px;
  padding-right: 5px;
  background: #f8fcff;
  color: #1070d8;
}
.ime svg {
  width: 16px;
  height: 16px;
}
.ime span {
  margin-left: -4px;
  font: bold 15px/24px "Noto Sans CJK SC", sans-serif;
}
.ime .sogou {
  position: absolute;
  left: -4px;
  bottom: 0;
  width: 32px;
  height: 30px;
}

.taskbar {
  display: flex;
  align-items: center;
  height: 40px;
  background: linear-gradient(90deg, #343a42, #343a3c 75%, #363c3e 80%, #1c2a30 90%, #1c262c);
  color: #fff;
  font: 12px/18px "Open Sans", "Noto Sans CJK SC", sans-serif;
}
.start svg {
  width: 16px;
  height: 16px;
}
.start {
  padding: 0 32px 0 16px;
}
.search svg {
  width: 19px;
  height: 20px;
}
.search {
  padding-right: 35px;
}
.files svg {
  width: 22px;
  height: 20px;
}
.files {
  width: 36px;
}
.tasks {
  display: flex;
  flex: 1;
  gap: 1px;
  height: 40px;
}
.tasks button {
  position: relative;
  display: flex;
  align-items: center;
  gap: 4px;
  width: 160px;
  padding-left: 10px;
  white-space: nowrap;
}
.tasks button::after {
  content: "";
  position: absolute;
  right: 4px;
  bottom: 0;
  left: 4px;
  height: 2px;
  background: #76b4ea;
}
.tasks .active {
  background: #5c6266;
}
.tasks svg {
  width: 24px;
  height: 24px;
}
.tasks svg.win {
  height: 21px;
}
.tray {
  display: flex;
  align-items: center;
  gap: 8px;
}
.tray svg {
  width: 16px;
  height: 16px;
}
.tray span {
  width: 16px;
  font-size: 13px;
  text-align: center;
}
.tray .s2 {
  margin-left: 4px;
}
.clock {
  position: relative;
  width: 60px;
  margin: 0 19px 2px 15px;
  line-height: 17px;
  text-align: center;
  white-space: nowrap;
}
.clock b {
  position: absolute;
  top: -1px;
  right: -7px;
  width: 10px;
  height: 10px;
  border-radius: 5px;
  background: #e81020;
  font-size: 8px;
  font-weight: normal;
  line-height: 10px;
}
.note {
  width: 18px;
  height: 18px;
  margin-right: 22px;
}
.note.last {
  margin-right: 24px;
}
</style>
